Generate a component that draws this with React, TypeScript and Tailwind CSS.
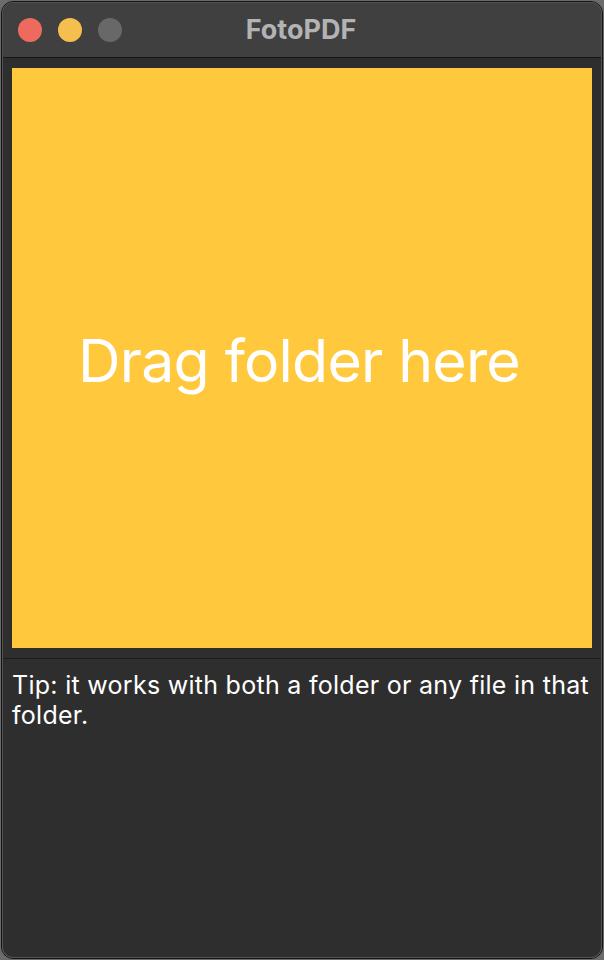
export default function App() {
  return (
    <div className="w-[604px] h-[960px] bg-[#6b6b6b] p-[1px]" style={{ fontFamily: 'Inter, "Noto Sans", sans-serif' }}>
      <div className="h-full rounded-[12px] border border-[#141414] overflow-hidden">
        <div className="h-full rounded-[11px] border border-[#525252] overflow-hidden flex flex-col bg-[#2e2e2e]">
          {/* title bar */}
          <div className="relative h-[55px] shrink-0 bg-[#404040] border-b border-[#161616] flex items-center">
            <div className="flex items-center gap-4 pl-[15px]">
              <span className="w-6 h-6 rounded-full bg-[#ee6a5f]" />
              <span className="w-6 h-6 rounded-full bg-[#f5bf4f]" />
              <span className="w-6 h-6 rounded-full bg-[#686868]" />
            </div>
            <div className="absolute inset-0 flex items-center justify-center pr-[2px]">
              <span className="text-[27px] font-bold text-[#b3b3b3]">FotoPDF</span>
            </div>
          </div>

          {/* drop zone */}
          <div className="px-[9px] pt-[10px] pb-[10px] border-b border-[#1c1c1c]">
            <div className="h-[580px] bg-[#ffc83d] flex items-center justify-center">
              <span className="text-white text-[59px] tracking-[-0.8px] pt-[6px] pr-[6px]">Drag folder here</span>
            </div>
          </div>

          <p className="pl-[9px] pr-[6px] pt-[11px] text-white text-[25px] tracking-[0.28px] leading-[30px]">
            Tip: it works with both a folder or any file in that folder.
          </p>
        </div>
      </div>
    </div>
  )
}
